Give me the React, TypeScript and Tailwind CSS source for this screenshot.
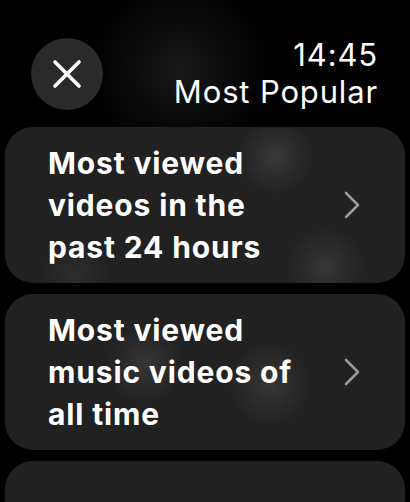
import React from "react";

type Row = {
  lines: string[];
  glow: string;
};

const rows: Row[] = [
  {
    lines: ["Most viewed", "videos in the", "past 24 hours"],
    glow:
      "bg-[radial-gradient(circle_at_270px_30px,rgba(80,80,84,0.5)_0px,transparent_38px),radial-gradient(circle_at_320px_140px,rgba(80,80,84,0.45)_0px,transparent_40px),radial-gradient(circle_at_70px_150px,rgba(70,70,74,0.35)_0px,transparent_36px)]",
  },
  {
    lines: ["Most viewed", "music videos of", "all time"],
    glow:
      "bg-[radial-gradient(circle_at_140px_70px,rgba(80,80,84,0.45)_0px,transparent_40px),radial-gradient(circle_at_265px_90px,rgba(80,80,84,0.45)_0px,transparent_42px)]",
  },
];

const Chevron = () => (
  <svg width="16" height="28" viewBox="0 0 16 28" fill="none" className="shrink-0">
    <path
      d="M2 2 L14 14 L2 26"
      stroke="#9a9ba1"
      strokeWidth="2.6"
      strokeLinecap="round"
      strokeLinejoin="round"
    />
  </svg>
);

const CloseButton = () => (
  <button className="w-[72px] h-[72px] rounded-full bg-[#2a2a2a] flex items-center justify-center">
    <svg width="30" height="30" viewBox="0 0 30 30" fill="none">
      <path
        d="M3 3 L27 27 M27 3 L3 27"
        stroke="#ffffff"
        strokeWidth="3.6"
        strokeLinecap="round"
      />
    </svg>
  </button>
);

export default function App() {
  return (
    <div
      className="w-[410px] h-[502px] overflow-hidden bg-black text-white flex flex-col bg-[radial-gradient(circle_at_180px_70px,rgba(40,40,40,0.6)_0px,transparent_90px)]"
      style={{ fontFamily: "Inter, 'Noto Sans', sans-serif" }}
    >
      <div className="flex justify-between items-start pl-[31px] pr-[32px] pt-[38px]">
        <CloseButton />
        <div className="text-right text-[31px] leading-[37px] -mt-[2px] tracking-[0.85px]">
          <div>14:45</div>
          <div>Most Popular</div>
        </div>
      </div>

      <div className="flex flex-col gap-[11px] mt-[17px] px-[5px]">
        {rows.map((row, i) => (
          <div
            key={i}
            className={`h-[156px] shrink-0 rounded-[28px] bg-[#212121] ${row.glow} flex items-center justify-between pl-[43px] pr-[45px]`}
          >
            <div className="text-[30px] leading-[42px] font-bold tracking-[0.85px]">
              {row.lines.map((l, j) => (
                <div key={j}>{l}</div>
              ))}
            </div>
            <Chevron />
          </div>
        ))}
        <div className="h-[156px] shrink-0 rounded-[28px] bg-[#212121]" />
      </div>
    </div>
  );
}
